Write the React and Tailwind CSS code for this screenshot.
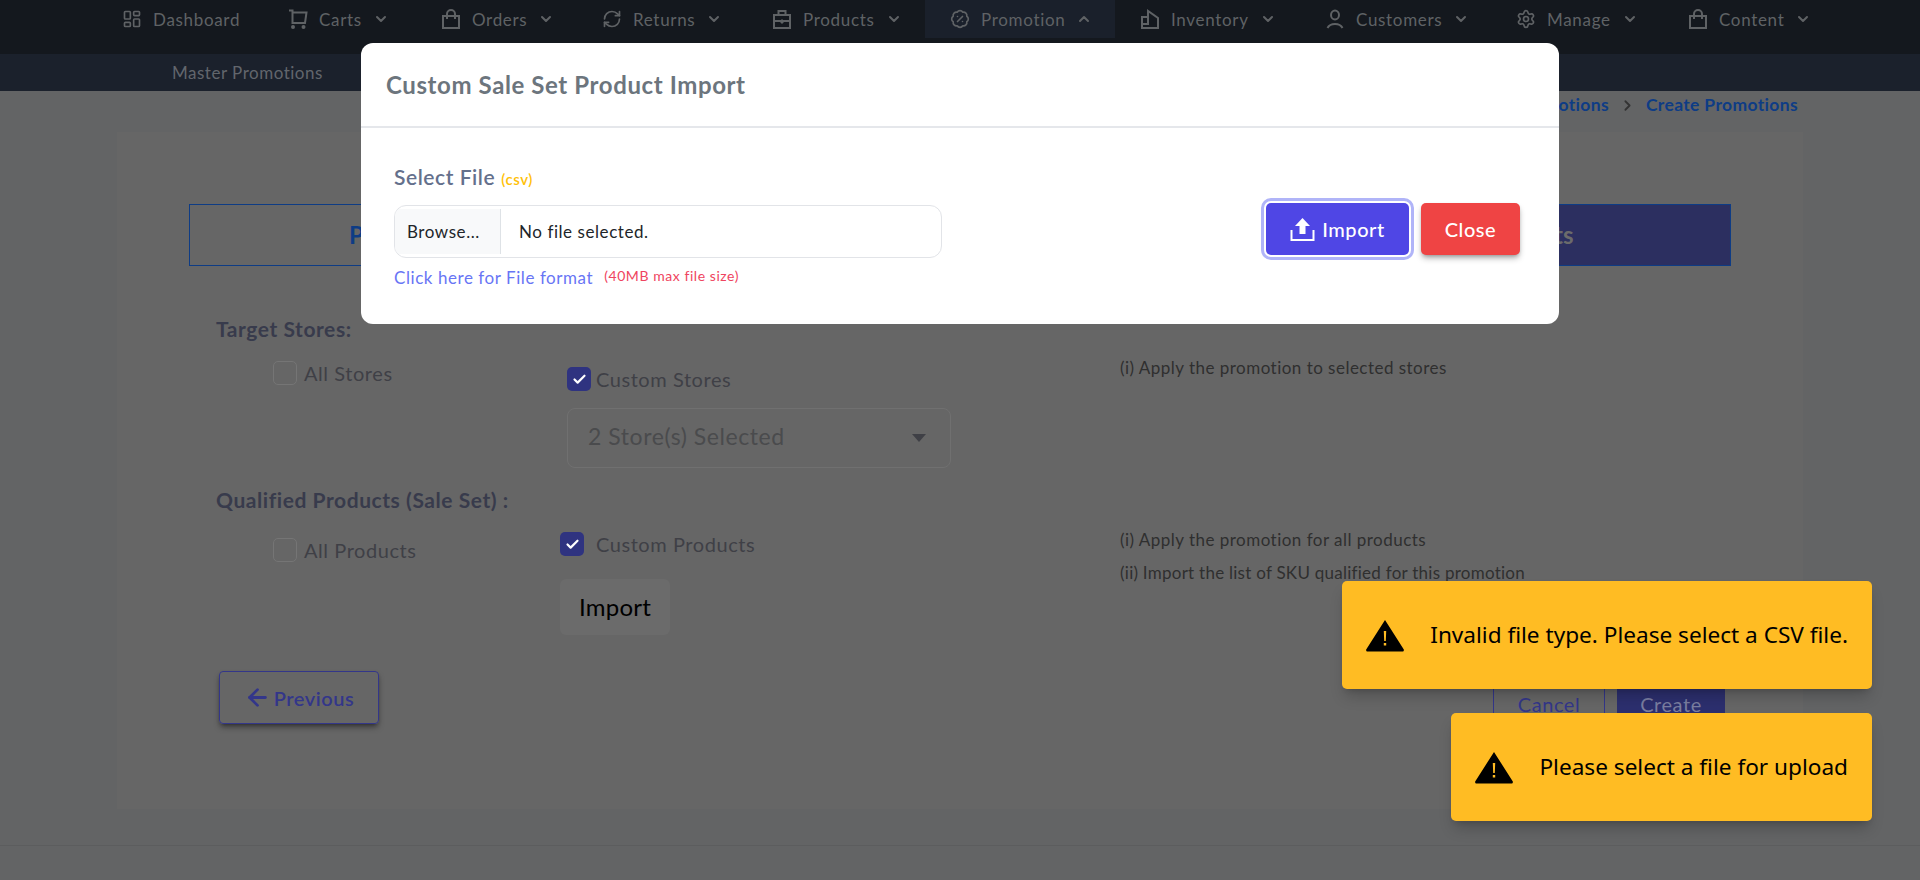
import React from 'react';
import { ChevronDown, ChevronUp, ChevronRight, LayoutDashboard, RefreshCw, BadgePercent, Settings, ArrowLeft, Check } from 'lucide-react';

const BagIcon = () => (
    <svg width="20" height="20" viewBox="0 0 20 20" fill="none" stroke="currentColor" strokeWidth="2">
        <path d="M2 7h16v12H2z" />
        <path d="M6 10V5a4 4 0 0 1 8 0v5" />
    </svg>
);

const CartIcon = () => (
    <svg width="20" height="20" viewBox="0 0 20 20" fill="none" stroke="currentColor" strokeWidth="2">
        <path d="M1 1.5h3.5v12.5h12.5l1.5-10.5H4.5" />
        <circle cx="5" cy="18" r="1" fill="currentColor" />
        <circle cx="15.5" cy="18" r="1" fill="currentColor" />
    </svg>
);

const CaseIcon = () => (
    <svg width="20" height="20" viewBox="0 0 20 20" fill="none" stroke="currentColor" strokeWidth="2">
        <path d="M2 6h16v13H2z" />
        <path d="M6.5 6V2h7v4" />
        <path d="M2 12h16" />
        <path d="M9 11h2v3H9z" fill="currentColor" strokeWidth="1" />
    </svg>
);

const InventoryIcon = () => (
    <svg width="20" height="20" viewBox="0 0 20 20" fill="none" stroke="currentColor" strokeWidth="2">
        <path d="M2 8h6V2l10 7v10H2z" />
        <path d="M8 8v7H2" />
    </svg>
);

const UserIcon = () => (
    <svg width="20" height="20" viewBox="0 0 20 20" fill="none" stroke="currentColor" strokeWidth="2">
        <ellipse cx="10" cy="6" rx="4" ry="4.5" />
        <path d="M2.5 19c1.5-3 4-4 7.5-4s6 1 7.5 4" />
    </svg>
);

const WarnIcon = () => (
    <svg width="38" height="33" viewBox="0 0 38 33">
        <path d="M19 1 37.5 30a1.5 1.5 0 0 1-1.2 2.5H1.7A1.5 1.5 0 0 1 .5 30z" fill="#000" />
        <path d="M17.8 12h2.4l-.4 10h-1.6zM17.8 24h2.4v2.6h-2.4z" fill="#ffbc23" />
    </svg>
);

const UploadIcon = () => (
    <svg width="25" height="25" viewBox="0 0 25 25" fill="none">
        <path d="M12.5 1 20 9h-4.5v8h-6V9H5z" fill="#fff" />
        <path d="M1.5 13v10h22V13" stroke="#fff" strokeWidth="2" />
    </svg>
);

const navItems = [
    { label: 'Dashboard', icon: <LayoutDashboard size={20} />, width: 'w-[166px]' },
    { label: 'Carts', icon: <CartIcon />, width: 'w-[153px]', caret: true },
    { label: 'Orders', icon: <BagIcon />, width: 'w-[161px]', caret: true },
    { label: 'Returns', icon: <RefreshCw size={20} />, width: 'w-[170px]', caret: true },
    { label: 'Products', icon: <CaseIcon />, width: 'w-[178px]', caret: true },
    { label: 'Promotion', icon: <BadgePercent size={20} />, width: 'w-[190px]', caret: true, active: true },
    { label: 'Inventory', icon: <InventoryIcon />, width: 'w-[185px]', caret: true },
    { label: 'Customers', icon: <UserIcon />, width: 'w-[191px]', caret: true },
    { label: 'Manage', icon: <Settings size={20} />, width: 'w-[172px]', caret: true },
    { label: 'Content', icon: <BagIcon />, width: 'w-[162px]', caret: true },
];

const NavBar = () => (
    <div className="flex h-[54px] pl-[97px] bg-[#14181e] text-[#5f6265]">
        {navItems.map((item) => (
            <div key={item.label} className={`flex h-[38px] items-center gap-[11px] pl-[25px] ${item.width} ${item.active ? 'bg-[#1a202b]' : ''}`}>
                {item.icon}
                <span className="text-[17px] leading-none tracking-[0.04em]">{item.label}</span>
                {item.caret && (item.active
                    ? <ChevronUp size={16} strokeWidth={3} />
                    : <ChevronDown size={16} strokeWidth={3} />)}
            </div>
        ))}
    </div>
);

const CheckBox = ({ checked }) => (
    checked ? (
        <span className="flex h-6 w-6 shrink-0 items-center justify-center rounded-[5px] bg-[#2f3380] text-white">
            <Check size={15} strokeWidth={3.5} />
        </span>
    ) : (
        <span className="h-6 w-6 shrink-0 rounded-[5px] border border-[#757575]" />
    )
);

const Page = () => (
    <div className="min-h-[880px] bg-[#636465]">
        <NavBar />
        <div className="flex h-[37px] items-center bg-[#1b212c] pl-[172px] text-[17px] tracking-[0.03em] text-[#62666c]">
            Master Promotions
        </div>

        <div className="flex h-[41px] items-start justify-end gap-[10px] pr-[122px] text-[17.5px] font-bold leading-[28px] tracking-[0.02em] text-[#0e3c85]">
            <span>Promotions</span>
            <ChevronRight size={17} strokeWidth={2.5} className="mt-[6px] text-[#333]" />
            <span>Create Promotions</span>
        </div>

        <div className="mx-[117px] h-[677px] bg-[#666666] px-[72px] pt-[72px]">
            <div className="grid h-[62px] grid-cols-3 text-[24px] font-bold">
                <div className="flex items-center justify-center border border-[#0e3c85] text-[#0e3c85]">Promotion Details</div>
                <div className="border-y border-[#0e3c85]" />
                <div className="flex items-center justify-center border border-[#0e3c85] bg-[#2c2f60] text-[#6b6b6b]">Qualified Products</div>
            </div>

            <div className="ml-[27px] mr-[6px] text-[#3f4046] tracking-[0.035em]">
                <h3 className="mt-[51px] text-[21px] font-bold leading-6 text-[#383b4c]">Target Stores:</h3>
                <div className="mt-[15px] flex">
                    <div className="flex w-[351px] items-start gap-[7px] pl-[57px] pt-[5px] text-[20px] leading-6">
                        <CheckBox />
                        <span>All Stores</span>
                    </div>
                    <div className="w-[553px] pt-[11px]">
                        <div className="flex items-center gap-[5px] text-[20px] leading-6">
                            <CheckBox checked />
                            <span>Custom Stores</span>
                        </div>
                        <div className="mt-[17px] flex h-[60px] w-[384px] items-center justify-between rounded-lg border border-[#707070] pl-5 pr-[24px] text-[23px] text-[#4a4b4d]">
                            <span className="-mt-[3px]">2 Store(s) Selected</span>
                            <span className="h-0 w-0 border-x-[7px] border-t-[8px] border-x-transparent border-t-[#3f4046]" />
                        </div>
                    </div>
                    <p className="text-[17px] leading-6 tracking-[0.028em] text-[#2f2f2f]">(i) Apply the promotion to selected stores</p>
                </div>

                <h3 className="mt-[20px] text-[21px] font-bold leading-6 text-[#383b4c]">Qualified Products (Sale Set) :</h3>
                <div className="mt-[20px] flex">
                    <div className="flex w-[344px] items-start gap-[7px] pl-[57px] pt-[6px] text-[20px] leading-6">
                        <CheckBox />
                        <span>All Products</span>
                    </div>
                    <div className="w-[560px]">
                        <div className="flex items-center gap-3 text-[20px] leading-6">
                            <CheckBox checked />
                            <span>Custom Products</span>
                        </div>
                        <button className="mt-[23px] h-[56px] w-[110px] rounded-md bg-[#6b6b6b] text-[24px] tracking-[0.01em] text-black">Import</button>
                    </div>
                    <div className="-mt-1 text-[17px] leading-6 tracking-[0.028em] text-[#2f2f2f]">
                        <p>(i) Apply the promotion for all products</p>
                        <p className="mt-[9px] tracking-[0.015em]">(ii) Import the list of SKU qualified for this promotion</p>
                    </div>
                </div>

                <div className="mt-[36px] flex items-start justify-between">
                    <button className="ml-[3px] flex h-[53px] w-[160px] items-center justify-center gap-[3px] rounded border border-[#33368a] text-[20px] font-semibold text-[#33368a] shadow-md shadow-black/40">
                        <ArrowLeft size={27} strokeWidth={2.5} />
                        Previous
                    </button>
                    <div className="mt-[7px] flex gap-3 text-[20px]">
                        <button className="h-[52px] w-[112px] border border-[#33368a] text-[#33368a]">Cancel</button>
                        <button className="h-[52px] w-[108px] bg-[#2c2f6e] text-[#7a7ea0]">Create</button>
                    </div>
                </div>
            </div>
        </div>

        <div className="mt-[36px] border-t border-[#5c5d5e]" />
    </div>
);

const ImportModal = () => (
    <div className="absolute left-[361px] top-[43px] h-[281px] w-[1198px] rounded-xl bg-white tracking-[0.035em]">
        <div className="flex h-[85px] items-center border-b-2 border-[#e5e7eb] pl-[25px] text-[24px] font-bold tracking-[0.025em] text-[#6c757d]">
            Custom Sale Set Product Import
        </div>
        <div className="flex items-start justify-between pl-[33px] pr-[39px]">
            <div className="w-[548px] pt-[33px]">
                <div className="flex h-[28px] items-baseline gap-[6px]">
                    <span className="text-[21px] font-semibold text-[#64708c]">Select File</span>
                    <span className="text-[15px] font-semibold text-[#ffc107]">(csv)</span>
                </div>
                <div className="mt-[16px] flex h-[53px] items-center overflow-hidden rounded-xl border border-[#e2e4e8] p-[3px] pl-0 text-[17px] text-[#212529]">
                    <span className="flex h-[45px] w-[106px] items-center border-r border-[#dee2e6] bg-[#f8f9fa] pl-3">Browse...</span>
                    <span className="pl-[18px]">No file selected.</span>
                </div>
                <div className="mt-[8px] flex items-center gap-[11px] leading-6">
                    <span className="text-[17px] text-[#6875f5]">Click here for File format</span>
                    <span className="-mt-1 text-[14px] text-[#ef4460]">(40MB max file size)</span>
                </div>
            </div>
            <div className="mt-[75px] flex gap-3 text-[20px] font-medium text-white">
                <button className="flex h-[52px] w-[143px] items-center justify-center gap-[7px] rounded-[5px] bg-[#4f46e5] outline-[3px] outline-offset-[2px] outline-[#b0b4f8]">
                    <UploadIcon />
                    Import
                </button>
                <button className="h-[52px] w-[99px] rounded-[5px] bg-[#ef4444] shadow-md shadow-black/30">Close</button>
            </div>
        </div>
    </div>
);

const Toast = ({ message }) => (
    <div className="flex h-[108px] items-center gap-[26px] self-end rounded-[5px] bg-[#ffbc23] px-6 text-[22.6px] text-black shadow-lg shadow-black/20 [font-family:'Noto_Sans',sans-serif]">
        <WarnIcon />
        <span>{message}</span>
    </div>
);

const App = () => {
    return (
        <div className="relative h-[880px] w-[1920px] overflow-hidden [font-family:Lato,sans-serif]">
            <Page />
            <ImportModal />
            <div className="absolute bottom-[59px] right-[48px] flex flex-col gap-6">
                <Toast message="Invalid file type. Please select a CSV file." />
                <Toast message="Please select a file for upload" />
            </div>
        </div>
    );
};

export default App;
